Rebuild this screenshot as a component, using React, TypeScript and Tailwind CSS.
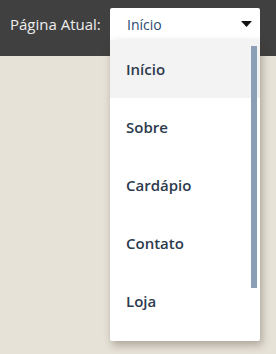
import React from "react";

const items = ["Início", "Sobre", "Cardápio", "Contato", "Loja"];

export default function App() {
  return (
    <div
      className="w-[276px] h-[354px] bg-[#e6e2d8] overflow-hidden"
      style={{ fontFamily: '"Open Sans", sans-serif' }}
    >
      <div className="h-[56px] bg-[#404040] flex items-start pl-[10px] pt-[8px]">
        <span className="w-[100px] text-[15px] leading-[32px] text-[#eeeeee] whitespace-nowrap">Página Atual:</span>
        <div className="relative w-[150px]">
          <div className="h-[32px] bg-white rounded-t-[2px] flex items-center pl-[17px] pr-[8px]">
            <span className="text-[14px] text-[#2a4970] flex-1">Início</span>
            <svg width="11" height="6" viewBox="0 0 11 6">
              <path d="M0 0 H11 L5.5 6 Z" fill="#111" />
            </svg>
          </div>
          <div className="absolute left-0 top-[32px] w-[150px] h-[301px] bg-white shadow-[2px_4px_8px_rgba(60,50,30,0.35)] rounded-b-[2px] overflow-hidden">
            {items.map((it, i) => (
              <div
                key={it}
                className={`h-[58px] flex items-center pl-[16px] text-[15px] font-semibold text-[#2c3a4d] ${
                  i === 0 ? "bg-[#f3f3f3]" : ""
                }`}
              >
                {it}
              </div>
            ))}
            <div className="absolute left-[141px] top-[6px] w-[6px] h-[242px] bg-[#8a9eb5]" />
          </div>
        </div>
      </div>
    </div>
  );
}
